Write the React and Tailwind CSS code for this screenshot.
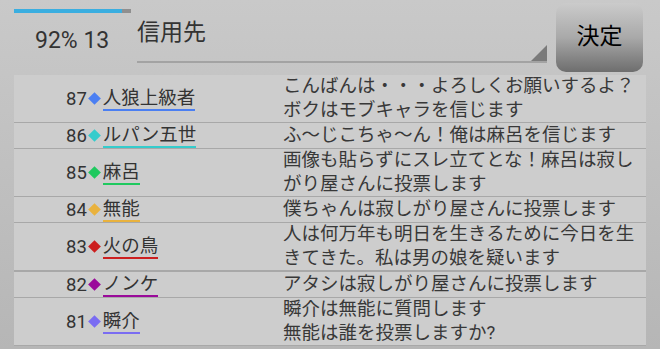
import React from 'react';

const rows = [
  { no: 87, name: '人狼上級者', color: '#4b7ff2', lines: ['こんばんは・・・よろしくお願いするよ？', 'ボクはモブキャラを信じます'] },
  { no: 86, name: 'ルパン五世', color: '#35cccc', lines: ['ふ〜じこちゃ〜ん！俺は麻呂を信じます'] },
  { no: 85, name: '麻呂', color: '#1fc95f', lines: ['画像も貼らずにスレ立てとな！麻呂は寂し', 'がり屋さんに投票します'] },
  { no: 84, name: '無能', color: '#e9b23e', lines: ['僕ちゃんは寂しがり屋さんに投票します'] },
  { no: 83, name: '火の鳥', color: '#cc1f1f', lines: ['人は何万年も明日を生きるために今日を生', 'きてきた。私は男の娘を疑います'], thick: true },
  { no: 82, name: 'ノンケ', color: '#9a0a9a', lines: ['アタシは寂しがり屋さんに投票します'] },
  { no: 81, name: '瞬介', color: '#7a6cf2', lines: ['瞬介は無能に質問します', '無能は誰を投票しますか?'] },
];

const font = { fontFamily: 'Roboto, "Noto Sans CJK JP", sans-serif' };

export default function App() {
  return (
    <div style={font} className="w-[660px] h-[349px] overflow-hidden bg-linear-to-b from-[#c9c9c9] to-[#b6b6b6] text-[#333]">
      {/* HEADER */}
      <div className="flex h-[75px]">
        <div className="w-[137px] pl-[14px] pt-[9px]">
          <div className="flex w-[117px] h-[4px] bg-[#8f8f8f]">
            <div className="w-[108px] h-full bg-[#3aaee0]" />
          </div>
          <div className="pl-[21px] mt-[14px] text-[23px] leading-[28px] text-[#333]">92% 13</div>
        </div>
        <div className="relative w-[410px] h-[63px] border-b-2 border-[#a3a3a3]">
          <div className="pt-[18px] text-[23px] leading-[30px] text-[#333]">信用先</div>
          <svg className="absolute right-0 bottom-0" width="16" height="16" viewBox="0 0 16 16">
            <polygon points="16,0 16,16 0,16" fill="#7a7a7a" />
          </svg>
        </div>
        <button className="ml-[9px] mt-[3px] w-[87px] h-[69px] rounded-[10px] bg-linear-to-b from-[#cbcbcb] via-[#a9a9a9] to-[#6e6e6e] text-[23px] text-black">
          決定
        </button>
      </div>

      {/* LIST */}
      <div className="mx-[14px] bg-[#cdcdcd]">
        {rows.map(r => (
          <div key={r.no} className={`flex items-center ${r.thick ? 'border-b-2' : 'border-b'} border-[#a8a8a8]`}>
            <div className="w-[269px] pl-[52px] flex items-center text-[18.5px]">
              <span className="leading-[22px]">{r.no}</span>
              <span className="w-[9px] h-[9px] rotate-45 mx-[3px]" style={{ background: r.color }} />
              <span className="leading-[22px] border-b-2 ml-px" style={{ borderColor: r.color }}>{r.name}</span>
            </div>
            <div className="flex-1 min-h-[25px] flex flex-col justify-center text-[18.5px] leading-[23.5px] text-[#383838]">
              {r.lines.map(l => <div key={l}>{l}</div>)}
            </div>
          </div>
        ))}
      </div>
    </div>
  );
}
